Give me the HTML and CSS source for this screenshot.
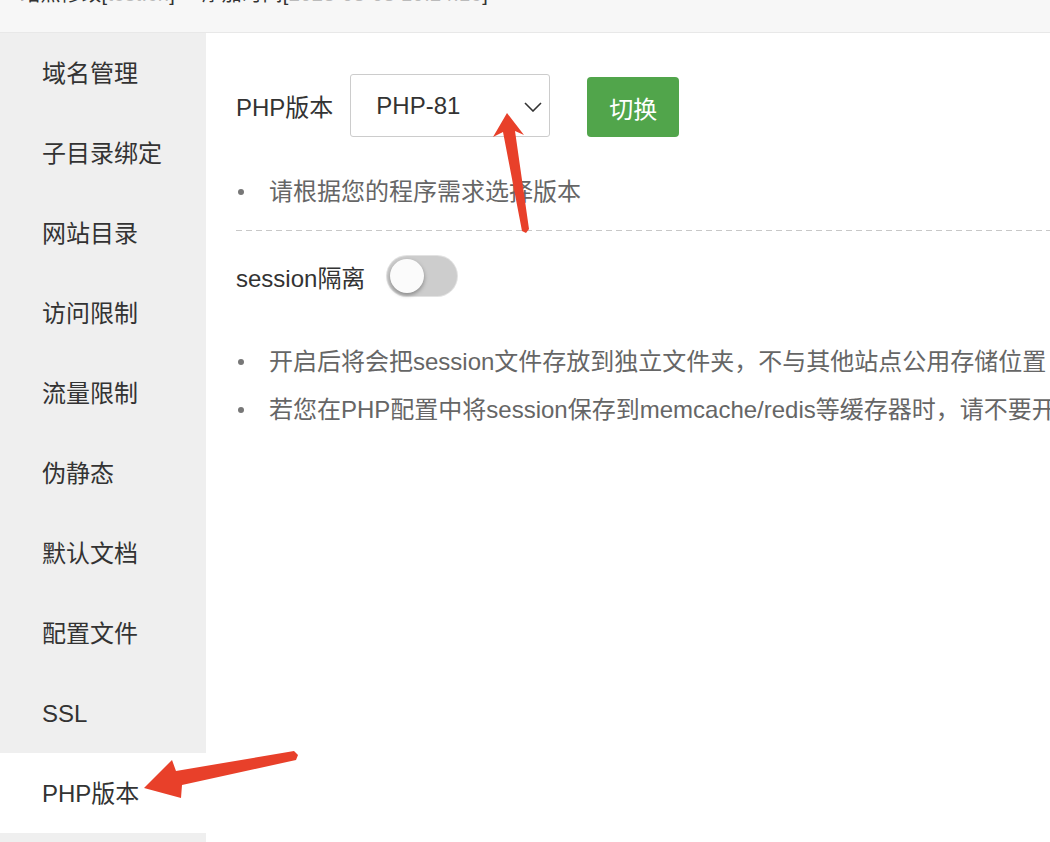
FILE: index.html
```html
<!DOCTYPE html>
<html lang="zh-CN">
<head>
  <meta charset="UTF-8" />
  <title>站点修改</title>
  <link rel="stylesheet" href="styles.css">
</head>
<body>
  <div class="title-bar">
    <span class="title-text">站点修改[<span class="dim">test.cn</span>] -- 添加时间[<span class="dim">2023-03-08 10:24:16</span>]</span>
  </div>
  <div class="main">
    <ul class="side-menu">
      <li>域名管理</li>
      <li>子目录绑定</li>
      <li>网站目录</li>
      <li>访问限制</li>
      <li>流量限制</li>
      <li>伪静态</li>
      <li>默认文档</li>
      <li>配置文件</li>
      <li>SSL</li>
      <li class="active">PHP版本</li>
      <li>Composer</li>
    </ul>
    <div class="content">
      <div class="php-row">
        <span class="row-label">PHP版本</span>
        <div class="select-box">
          <span>PHP-81</span>
          <svg class="chevron" width="18" height="10" viewBox="0 0 18 10"><path d="M1 1 L9 9 L17 1" fill="none" stroke="#333" stroke-width="1.6"/></svg>
        </div>
        <button class="switch-btn">切换</button>
      </div>
      <ul class="tips first-tips">
        <li>请根据您的程序需求选择版本</li>
      </ul>
      <div class="dash-line"></div>
      <div class="session-row">
        <span class="row-label">session隔离</span>
        <span class="toggle"><span class="knob"></span></span>
      </div>
      <ul class="tips session-tips">
        <li>开启后将会把session文件存放到独立文件夹，不与其他站点公用存储位置</li>
        <li>若您在PHP配置中将session保存到memcache/redis等缓存器时，请不要开启此选项</li>
      </ul>
    </div>
  </div>

  <svg class="arrows" width="1050" height="842" viewBox="0 0 1050 842">
    <polygon fill="#e8402a" points="507,113 524,135 515,131 529,229 526,233 522,231 503,132 493,137"/>
    <polygon fill="#e8402a" points="144,788 172,760 176,771 294,751 298,755 296,760 182,785 181,798"/>
  </svg>
</body>
</html>
```

FILE: styles.css
```css
body {
  margin: 0;
  background: #fff;
  font-family: "Liberation Sans", "Noto Sans CJK SC", sans-serif;
  font-size: 24px;
  color: #333;
  overflow: hidden;
  height: 842px;
}
.title-bar {
  height: 32px;
  background: #f7f7f7;
  border-bottom: 1px solid #e8e8e8;
  overflow: hidden;
  padding-left: 20px;
}
.title-text {
  display: block;
  margin-top: -16px;
  line-height: 20px;
  font-size: 20px;
  letter-spacing: 0.4px;
  color: #333;
  white-space: nowrap;
}
.title-text .dim {
  color: #bbb;
}
.main {
  display: flex;
}
.side-menu {
  list-style: none;
  margin: 0;
  padding: 0;
  width: 206px;
  flex-shrink: 0;
  background: #efefef;
}
.side-menu li {
  height: 80px;
  line-height: 82px;
  overflow: hidden;
  padding-left: 42px;
  color: #333;
}
.side-menu li.active {
  background: #fff;
}
.content {
  flex: 1;
  padding: 41px 0 0 30px;
  white-space: nowrap;
}
.php-row {
  display: flex;
  align-items: center;
}
.row-label {
  color: #333;
}
.select-box {
  margin-left: 17px;
  width: 200px;
  height: 63px;
  border: 1.5px solid #ccc;
  border-radius: 3px;
  display: flex;
  align-items: center;
  justify-content: space-between;
  padding: 0 7px 0 25px;
  box-sizing: border-box;
}
.select-box .chevron {
  margin-top: 2px;
}
.switch-btn {
  margin-left: 37px;
  width: 92px;
  height: 60px;
  margin-top: 3px;
  border: none;
  border-radius: 4px;
  background: #51a54b;
  color: #fff;
  font-family: inherit;
  font-size: 24px;
}
.tips {
  list-style: none;
  margin: 0;
  padding: 0;
}
.tips li {
  position: relative;
  padding-left: 33px;
  line-height: 48px;
  color: #666;
}
.tips li::before {
  content: "";
  position: absolute;
  left: 2px;
  top: 21px;
  width: 6px;
  height: 6px;
  border-radius: 50%;
  background: #777;
}
.first-tips {
  margin-top: 31px;
}
.dash-line {
  margin-top: 14px;
  height: 1px;
  background: repeating-linear-gradient(to right, #c8c8c8 0 6px, transparent 6px 10px);
}
.session-row {
  display: flex;
  align-items: center;
  margin-top: 25px;
}
.toggle {
  position: relative;
  margin-left: 22px;
  width: 70px;
  height: 40px;
  border-radius: 20px;
  background: #cdcdcd;
  box-shadow: 0 0 0 1px #e2e2e2;
}
.knob {
  position: absolute;
  left: 3px;
  top: 3px;
  width: 34px;
  height: 34px;
  border-radius: 50%;
  background: #fbfbfb;
  box-shadow: 0 2px 4px rgba(0, 0, 0, 0.35);
}
.session-tips {
  margin-top: 42px;
}
.arrows {
  position: absolute;
  left: 0;
  top: 0;
  pointer-events: none;
}
```
